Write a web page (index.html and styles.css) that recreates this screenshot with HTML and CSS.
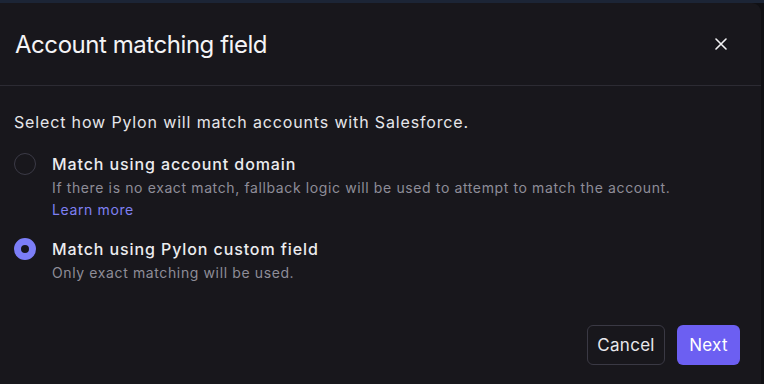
FILE: index.html
```html
<!DOCTYPE html>
<html>
<head>
<meta charset="utf-8">
<link rel="stylesheet" href="styles.css">
</head>
<body>
<div class="backdrop">
  <div class="modal">
    <div class="modal-header">
      <h2 class="title">Account matching field</h2>
      <button class="close" aria-label="Close">
        <svg width="12" height="12" viewBox="0 0 12 12"><path d="M1 1L11 11M11 1L1 11" stroke="#f2f2f4" stroke-width="1.6" stroke-linecap="round"/></svg>
      </button>
    </div>
    <div class="modal-body">
      <p class="intro">Select how Pylon will match accounts with Salesforce.</p>
      <div class="options">
        <label class="option">
          <span class="radio"></span>
          <span class="option-text">
            <span class="option-label">Match using account domain</span>
            <span class="option-desc">If there is no exact match, fallback logic will be used to attempt to match the account.</span>
            <a class="learn" href="#">Learn more</a>
          </span>
        </label>
        <label class="option">
          <span class="radio checked"></span>
          <span class="option-text">
            <span class="option-label">Match using Pylon custom field</span>
            <span class="option-desc">Only exact matching will be used.</span>
          </span>
        </label>
      </div>
    </div>
    <div class="modal-footer">
      <button class="btn btn-secondary">Cancel</button>
      <button class="btn btn-primary">Next</button>
    </div>
  </div>
</div>
</body>
</html>
```

FILE: styles.css
```css
html, body {
  margin: 0;
  padding: 0;
  height: 100%;
  background: #0f0f13;
  overflow: hidden;
}
body {
  font-family: "Inter", "Noto Sans", sans-serif;
  color: #ececef;
}
.backdrop {
  height: 100%;
  background: linear-gradient(#1c2536 0, #1c2536 3px, #101014 3px);
  padding-top: 3px;
  box-sizing: border-box;
}
.modal {
  width: 761px;
  height: 381px;
  background: #18171c;
  border-radius: 0 9px 0 0;
  display: flex;
  flex-direction: column;
}
.modal-header {
  height: 82px;
  border-bottom: 1px solid #2c2b33;
  display: flex;
  align-items: center;
  justify-content: space-between;
  padding: 0 34px 0 15px;
}
.title {
  margin: 0;
  font-size: 24px;
  font-weight: 400;
  letter-spacing: -0.45px;
  color: #f4f4f6;
  padding-top: 1px;
}
.close {
  background: none;
  border: 0;
  padding: 0;
  width: 12px;
  height: 12px;
  display: flex;
}
.modal-body {
  padding: 24px 15px 0 14px;
}
.intro {
  margin: 0 0 18px;
  font-size: 16px;
  line-height: 24px;
  letter-spacing: 0.85px;
  color: #e6e6ea;
}
.options {
  display: flex;
  flex-direction: column;
  gap: 16px;
}
.option {
  display: flex;
  gap: 16px;
  align-items: flex-start;
}
.radio {
  width: 22px;
  height: 22px;
  box-sizing: border-box;
  border: 1.5px solid #3b3a46;
  border-radius: 50%;
  margin-top: 1px;
  flex: none;
}
.radio.checked {
  border: 7.5px solid #7c7ef7;
  background: #18171c;
}
.option-text {
  display: flex;
  flex-direction: column;
}
.option-label {
  font-size: 16px;
  font-weight: 500;
  line-height: 24px;
  letter-spacing: 0.9px;
  color: #ececef;
}
.option-desc {
  font-size: 14px;
  line-height: 22px;
  letter-spacing: 0.62px;
  color: #8e8d98;
  padding-top: 1px;
}
.learn {
  font-size: 14px;
  line-height: 22px;
  letter-spacing: 0.62px;
  color: #7f80f2;
  text-decoration: none;
}
.modal-footer {
  display: flex;
  justify-content: flex-end;
  gap: 12px;
  padding: 0 21px 0 0;
  margin-top: auto;
  margin-bottom: 19px;
}
.btn {
  height: 40px;
  box-sizing: border-box;
  border-radius: 6px;
  font-family: inherit;
  font-size: 17px;
  letter-spacing: 0.3px;
  padding: 0;
}
.btn-secondary {
  background: #18171c;
  border: 1px solid #3a3944;
  color: #e8e8ec;
  width: 78px;
}
.btn-primary {
  background: #6c5ff2;
  border: 0;
  color: #ffffff;
  width: 63px;
}
```
